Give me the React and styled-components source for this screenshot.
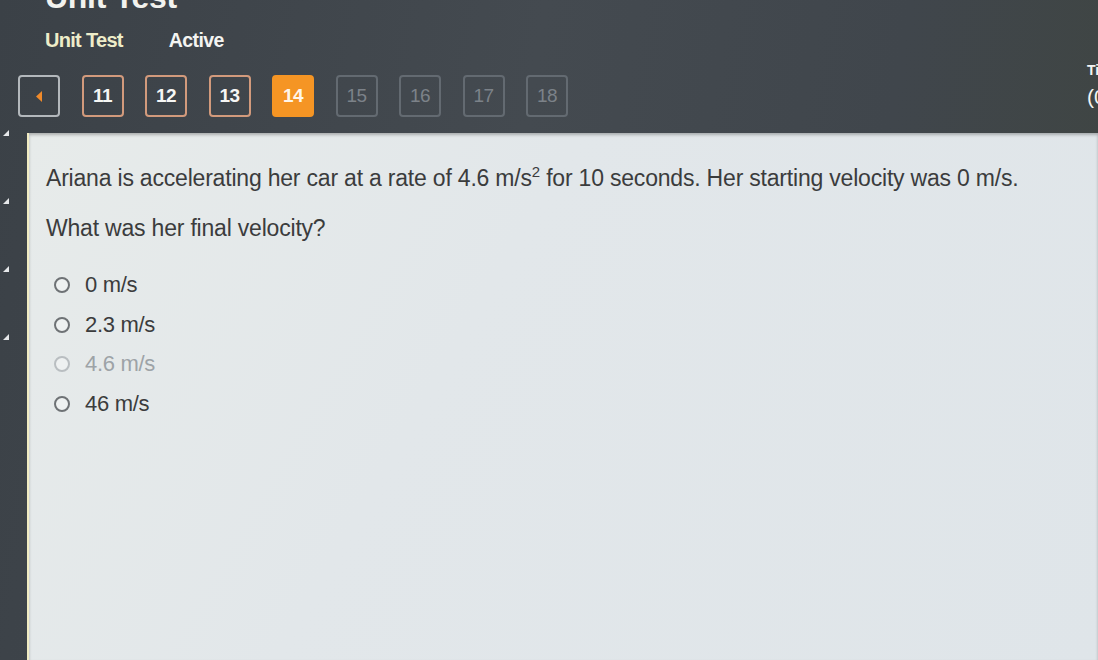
import React from 'react';
import styled, { createGlobalStyle } from 'styled-components';

const Global = createGlobalStyle`
  html, body {
    margin: 0;
    padding: 0;
    overflow: hidden;
  }
  body {
    font-family: "Liberation Sans", Arial, sans-serif;
    background: #40464c;
  }
`;

const Page = styled.div`
  width: 1098px;
  height: 660px;
  overflow: hidden;
  display: flex;
  flex-direction: column;
  background: linear-gradient(100deg, #3b4147 0%, #444a50 45%, #40464c 75%, #3f4541 100%);
`;

const Header = styled.div`
  height: 133px;
  flex-shrink: 0;
  display: flex;
`;

const HeaderMain = styled.div`
  flex: 1;
  display: flex;
  flex-direction: column;
`;

const BigTitle = styled.div`
  margin: -19px 0 0 45px;
  font-size: 32px;
  font-weight: 700;
  line-height: 32px;
  height: 32px;
  color: #f2f2ee;
  letter-spacing: -0.3px;
`;

const TitleRow = styled.div`
  display: flex;
  align-items: baseline;
  gap: 46px;
  margin: 16px 0 0 45px;
`;

const UnitName = styled.span`
  font-size: 20px;
  font-weight: 700;
  color: #eeedc9;
  letter-spacing: -0.7px;
`;

const Status = styled.span`
  font-size: 19.5px;
  font-weight: 700;
  color: #f4f4f2;
  letter-spacing: -0.6px;
`;

const NavRow = styled.div`
  display: flex;
  gap: 21.5px;
  margin: 23px 0 0 18px;
`;

const tones = {
  back: { border: '#b3b8bc', bg: 'transparent', color: '#f08a2a', weight: 700 },
  done: { border: '#d29a7c', bg: 'transparent', color: '#f6f6f4', weight: 700 },
  current: { border: '#f59524', bg: '#f59524', color: '#fff6ea', weight: 700 },
  todo: { border: '#636a71', bg: 'transparent', color: '#7c8289', weight: 400 },
};

const NavBtn = styled.div`
  box-sizing: border-box;
  width: 42px;
  height: 42px;
  border: 2px solid ${(p) => tones[p.$tone].border};
  background: ${(p) => tones[p.$tone].bg};
  border-radius: 4px;
  display: flex;
  align-items: center;
  justify-content: center;
  font-size: 19px;
  font-weight: ${(p) => tones[p.$tone].weight};
  color: ${(p) => tones[p.$tone].color};
  letter-spacing: -0.6px;
`;

const TimerSide = styled.div`
  width: 11px;
  flex-shrink: 0;
  white-space: nowrap;
  color: #f4f4f2;
  padding-top: 62px;
`;

const TimerLabel = styled.div`
  font-size: 14px;
  font-weight: 700;
`;

const TimerValue = styled.div`
  font-size: 21px;
  margin-top: 7px;
`;

const Body = styled.div`
  flex: 1;
  display: flex;
`;

const Rail = styled.div`
  width: 24px;
  flex-shrink: 0;
  display: flex;
  flex-direction: column;
  gap: 62px;
  padding-left: 3px;
  margin-top: -3px;
`;

const Marker = styled.div`
  width: 0;
  height: 0;
  border-left: 6px solid transparent;
  border-bottom: 6px solid #e6e8ea;
`;

const Panel = styled.div`
  flex: 1;
  background: linear-gradient(120deg, #e7ebea 0%, #e2e7ea 40%, #dfe5e9 100%);
  border-left: 2px solid #f1ecc2;
  box-shadow: inset 0 2px 3px rgba(0, 0, 0, 0.25);
  padding: 30px 0 0 17px;
  color: #3b3c3d;
`;

const Question = styled.p`
  margin: 0;
  font-size: 23px;
  line-height: 30px;
  letter-spacing: -0.2px;
  sup {
    font-size: 15px;
    line-height: 0;
    vertical-align: 9px;
  }
`;

const Prompt = styled.p`
  margin: 20px 0 0;
  font-size: 23px;
  line-height: 30px;
  letter-spacing: -0.2px;
`;

const Options = styled.div`
  display: flex;
  flex-direction: column;
  gap: 9.5px;
  margin: 27px 0 0 8px;
`;

const Option = styled.label`
  display: flex;
  align-items: center;
  gap: 15px;
  height: 30px;
  font-size: 22px;
  letter-spacing: -0.3px;
  color: ${(p) => (p.$faded ? '#9da3a7' : '#3b3c3d')};
`;

const Radio = styled.span`
  box-sizing: border-box;
  width: 16px;
  height: 16px;
  border-radius: 50%;
  border: 2px solid ${(p) => (p.$faded ? '#b9bec1' : '#6e7275')};
  background: #eef1f1;
`;

const pages = [
  { n: 11, tone: 'done' },
  { n: 12, tone: 'done' },
  { n: 13, tone: 'done' },
  { n: 14, tone: 'current' },
  { n: 15, tone: 'todo' },
  { n: 16, tone: 'todo' },
  { n: 17, tone: 'todo' },
  { n: 18, tone: 'todo' },
];

const answers = [
  { text: '0 m/s' },
  { text: '2.3 m/s' },
  { text: '4.6 m/s', faded: true },
  { text: '46 m/s' },
];

export default function App() {
  return (
    <>
      <Global />
      <Page>
        <Header>
          <HeaderMain>
            <BigTitle>Unit Test</BigTitle>
            <TitleRow>
              <UnitName>Unit Test</UnitName>
              <Status>Active</Status>
            </TitleRow>
            <NavRow>
              <NavBtn $tone="back">
                <svg width="8" height="11" viewBox="0 0 8 11">
                  <path d="M7 0 L1 5.5 L7 11 Z" fill="#f08a2a" />
                </svg>
              </NavBtn>
              {pages.map((p) => (
                <NavBtn key={p.n} $tone={p.tone}>
                  {p.n}
                </NavBtn>
              ))}
            </NavRow>
          </HeaderMain>
          <TimerSide>
            <TimerLabel>Time</TimerLabel>
            <TimerValue>(00:00)</TimerValue>
          </TimerSide>
        </Header>
        <Body>
          <Rail>
            <Marker />
            <Marker />
            <Marker />
            <Marker />
          </Rail>
          <Panel>
            <Question>
              Ariana is accelerating her car at a rate of 4.6 m/s<sup>2</sup> for 10 seconds. Her
              starting velocity was 0 m/s.
            </Question>
            <Prompt>What was her final velocity?</Prompt>
            <Options>
              {answers.map((a) => (
                <Option key={a.text} $faded={a.faded}>
                  <Radio $faded={a.faded} />
                  {a.text}
                </Option>
              ))}
            </Options>
          </Panel>
        </Body>
      </Page>
    </>
  );
}
